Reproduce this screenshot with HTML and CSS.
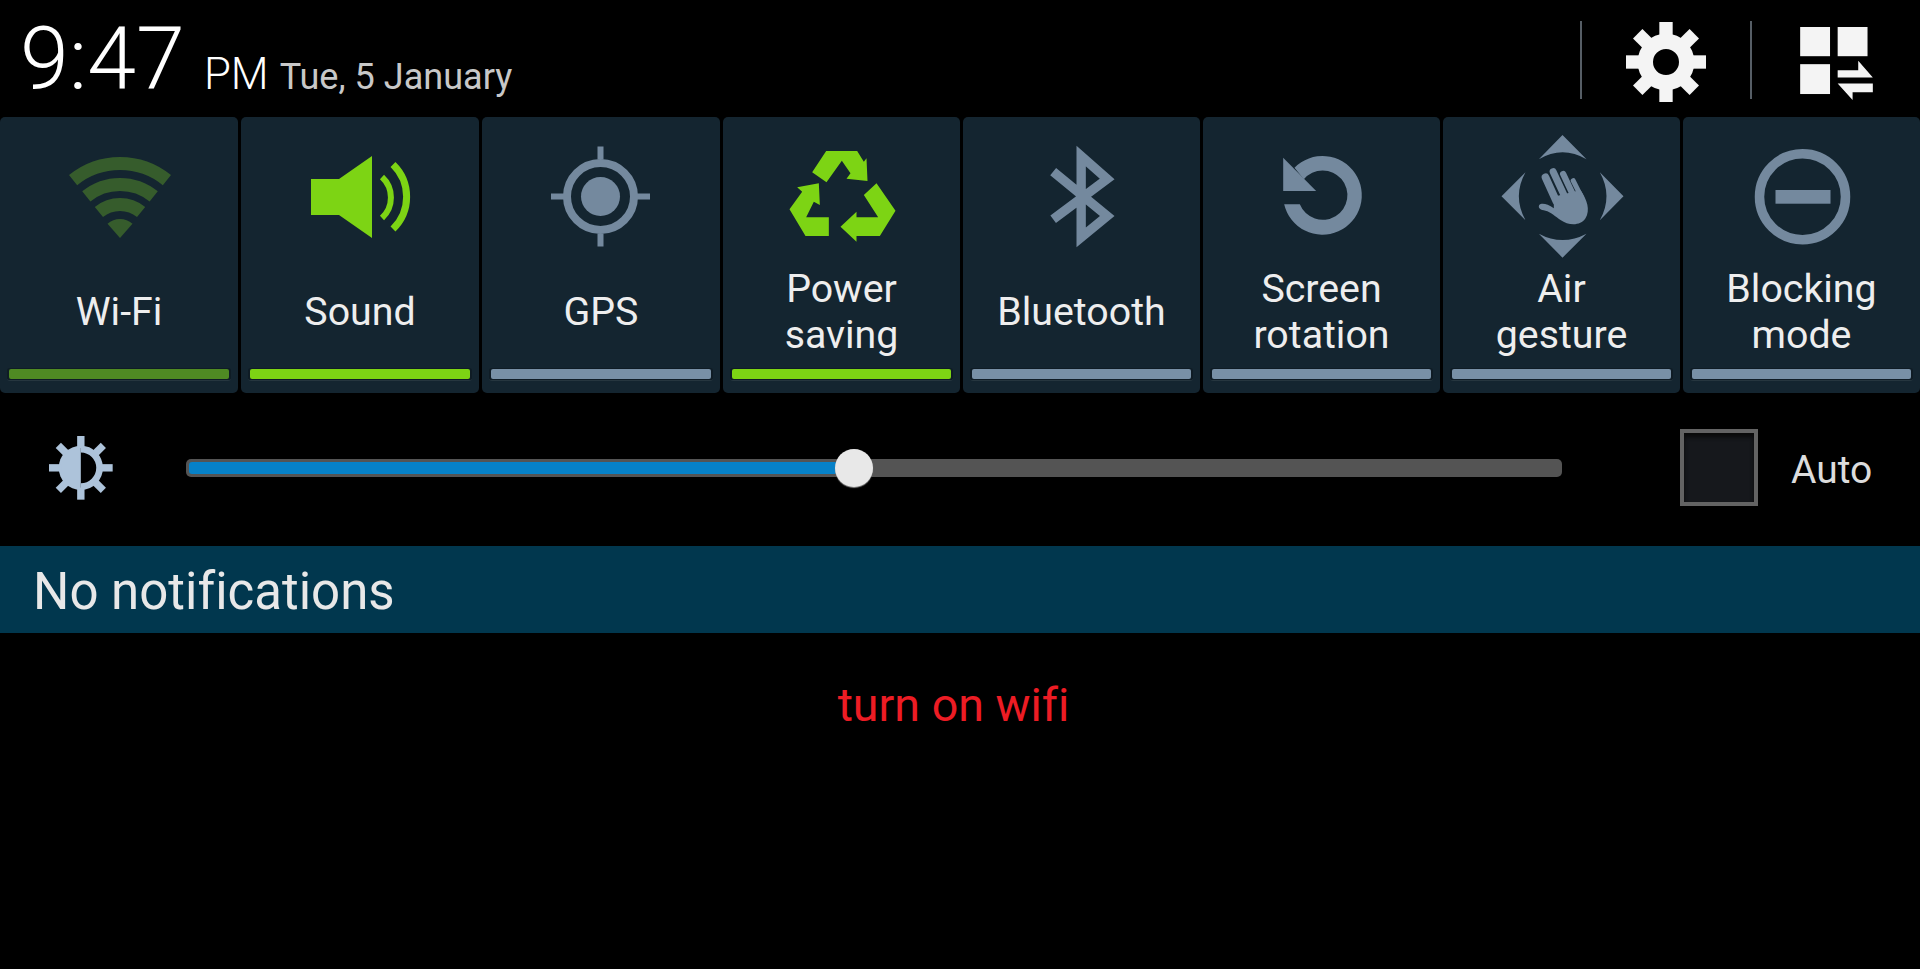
FILE: index.html
```html
<!DOCTYPE html>
<html lang="en">
<head>
  <meta charset="UTF-8" />
  <title>Notification panel</title>
  <link rel="stylesheet" href="styles.css">
</head>
<body>

  <header class="top">
    <div class="clock">
      <span class="time">9:47</span>
      <span class="ampm">PM</span>
      <span class="date">Tue, 5 January</span>
    </div>
    <div class="top-actions">
      <div class="sep"></div>
      <svg class="gear" viewBox="47 33 240 240">
        <g transform="translate(167 153)">
          <circle class="line" r="62" stroke-width="46" />
          <rect x="-20" y="-120" width="40" height="45" />
          <rect x="-20" y="-120" width="40" height="45" transform="rotate(45)" />
          <rect x="-20" y="-120" width="40" height="45" transform="rotate(90)" />
          <rect x="-20" y="-120" width="40" height="45" transform="rotate(135)" />
          <rect x="-20" y="-120" width="40" height="45" transform="rotate(180)" />
          <rect x="-20" y="-120" width="40" height="45" transform="rotate(225)" />
          <rect x="-20" y="-120" width="40" height="45" transform="rotate(270)" />
          <rect x="-20" y="-120" width="40" height="45" transform="rotate(315)" />
        </g>
      </svg>
      <div class="sep"></div>
      <svg class="grid-icon" viewBox="570 48 219 220">
        <rect x="570" y="48" width="90" height="88" />
        <rect x="683" y="48" width="90" height="88" />
        <rect x="570" y="160" width="90" height="90" />
        <polygon points="683,178 745,178 745,150 789,200 683,200" />
        <polygon points="683,218 789,218 789,245 728,245 728,268" />
      </svg>
    </div>
  </header>

  <div class="tiles">
    <div class="tile dim">
      <div class="tile-icon">
        <svg viewBox="0 0 120 100">
          <path class="line" stroke-width="13" d="M14.1 34.1A74.5 74.5 0 0 1 107.9 34.1" />
          <path class="line" stroke-width="13" d="M27.3 50.4A53.5 53.5 0 0 1 94.7 50.4" />
          <path class="line" stroke-width="13" d="M39.9 66A33.5 33.5 0 0 1 82.1 66" />
          <path d="M61 92L48.5 77.7A19 19 0 0 1 73.5 77.7Z" />
        </svg>
      </div>
      <div class="tile-label">Wi-Fi</div>
      <div class="tile-bar"><div></div></div>
    </div>

    <div class="tile on">
      <div class="tile-icon">
        <svg viewBox="0 0 120 100">
          <polygon points="11,33 39,33 72,10 72,92 39,69 11,69" />
          <path class="line" stroke-width="6" d="M82 31A28 28 0 0 1 82 72" />
          <path class="line" stroke-width="7" d="M93 18.5A45 45 0 0 1 93 83" />
        </svg>
      </div>
      <div class="tile-label">Sound</div>
      <div class="tile-bar"><div></div></div>
    </div>

    <div class="tile off">
      <div class="tile-icon">
        <svg viewBox="0 0 120 100">
          <circle class="line" cx="59.5" cy="50.5" r="33.5" stroke-width="8" />
          <circle cx="59.5" cy="50.5" r="19.5" />
          <rect x="56.5" y="0.5" width="6" height="13" />
          <rect x="56.5" y="87.5" width="6" height="13" />
          <rect x="10" y="47.5" width="13" height="6" />
          <rect x="96" y="47.5" width="13" height="6" />
        </svg>
      </div>
      <div class="tile-label">GPS</div>
      <div class="tile-bar"><div></div></div>
    </div>

    <div class="tile on">
      <div class="tile-icon">
        <svg viewBox="64.5 48 360 300">
          <polygon points="155,127 197,63 290,63 310,95 318,85 321,153 258,146 270,130 244,92 198,157" />
          <polygon points="175,160 178,225 160,215 137,262 205,262 205,318 135,318 87,238 125,185 110,172" />
          <polygon points="348,160 405,242 358,318 288,318 288,335 240,290 288,245 288,262 353,262 310,195" />
        </svg>
      </div>
      <div class="tile-label">Power<br>saving</div>
      <div class="tile-bar"><div></div></div>
    </div>

    <div class="tile off">
      <div class="tile-icon">
        <svg viewBox="784.5 48 360 300">
          <path class="line" stroke-width="28" stroke-miterlimit="8" d="M878 125L1040 258L962 322V78L1040 147L878 268" />
        </svg>
      </div>
      <div class="tile-label">Bluetooth</div>
      <div class="tile-bar"><div></div></div>
    </div>

    <div class="tile off">
      <div class="tile-icon">
        <svg viewBox="-25.5 0 360 300">
          <path d="M41 175A118 118 0 1 0 72 65L100 100A74 74 0 1 1 88 175Z" />
          <polygon points="38,35 38,135 137,135" />
        </svg>
      </div>
      <div class="tile-label">Screen<br>rotation</div>
      <div class="tile-bar"><div></div></div>
    </div>

    <div class="tile off">
      <div class="tile-icon">
        <svg viewBox="64.5 78 360 300">
          <path d="M246 45L318 118Q246 76 175 118Z" />
          <path d="M246 413L318 341Q246 379 175 341Z" />
          <path d="M63 229L135 157Q95 229 135 301Z" />
          <path d="M429 229L358 157Q398 229 358 301Z" />
          <g transform="translate(150 120)">
            <path class="line round" stroke-width="23" d="M45 52L78 125" />
            <path class="line round" stroke-width="21" d="M68 35L105 115" />
            <path class="line round" stroke-width="19" d="M98 42L130 110" />
            <path class="line round" stroke-width="15" d="M128 62L152 110" />
            <path d="M70 110L150 90C170 120 180 150 165 175C150 198 115 198 90 180C75 170 60 155 45 152C30 150 22 145 26 135C32 128 50 130 70 145Z" />
          </g>
        </svg>
      </div>
      <div class="tile-label">Air<br>gesture</div>
      <div class="tile-bar"><div></div></div>
    </div>

    <div class="tile off">
      <div class="tile-icon">
        <svg viewBox="-0.5 0 120 100">
          <circle class="line" cx="60" cy="50.7" r="43" stroke-width="9.5" />
          <rect x="33" y="44" width="55" height="13.7" />
        </svg>
      </div>
      <div class="tile-label">Blocking<br>mode</div>
      <div class="tile-bar"><div></div></div>
    </div>
  </div>

  <div class="brightness">
    <svg class="sun" viewBox="57 33 191 191">
      <g transform="translate(152 128)">
        <path d="M0 -66A66 66 0 0 0 0 66Z" />
        <path class="line" stroke-width="20" d="M0 -56A56 56 0 0 1 0 56" />
        <rect class="ray" x="-11" y="-95" width="22" height="36" />
        <rect class="ray" x="-11" y="-95" width="22" height="36" transform="rotate(45)" />
        <rect class="ray" x="-11" y="-95" width="22" height="36" transform="rotate(90)" />
        <rect class="ray" x="-11" y="-95" width="22" height="36" transform="rotate(135)" />
        <rect class="ray" x="-11" y="-95" width="22" height="36" transform="rotate(180)" />
        <rect class="ray" x="-11" y="-95" width="22" height="36" transform="rotate(225)" />
        <rect class="ray" x="-11" y="-95" width="22" height="36" transform="rotate(270)" />
        <rect class="ray" x="-11" y="-95" width="22" height="36" transform="rotate(315)" />
      </g>
    </svg>
    <div class="track">
      <div class="track-fill"></div>
      <div class="thumb"></div>
    </div>
    <div class="auto-check"></div>
    <div class="auto-label">Auto</div>
  </div>

  <div class="band">No notifications</div>

  <div class="message">turn on wifi</div>

</body>
</html>
```

FILE: styles.css
```css
body {
  margin: 0;
  height: 969px;
  overflow: hidden;
  background-color: #000;
  font-family: Roboto, "Liberation Sans", sans-serif;
  font-variant-ligatures: none;
  color: #fff;
}
svg {
  display: block;
  fill: currentColor;
}
svg .line {
  fill: none;
  stroke: currentColor;
}
svg .round {
  stroke-linecap: round;
}

.top {
  height: 117px;
  display: flex;
  justify-content: space-between;
}
.clock {
  display: flex;
  align-items: baseline;
  height: 100px;
  padding-left: 20px;
}
.time {
  font-size: 88px;
  font-weight: 300;
  line-height: 118px;
}
.ampm {
  font-size: 43.7px;
  font-weight: 300;
  margin-left: 19px;
}
.date {
  font-size: 36.1px;
  font-weight: 400;
  color: #c8c8c8;
  margin-left: 11px;
}
.top-actions {
  display: flex;
  align-items: center;
  height: 120px;
  padding-right: 47px;
}
.sep {
  width: 2px;
  height: 78px;
  background-color: #565e66;
}
.gear {
  width: 80px;
  height: 80px;
  margin: 3px 44px 0;
  color: #f4f4f4;
}
.grid-icon {
  width: 73px;
  height: 73px;
  margin: 6px 0 0 48px;
  color: #f4f4f4;
}

.tiles {
  display: grid;
  grid-template-columns: 238px 238px 238px 237px 237px 237px 237px 237px;
  gap: 3px;
  height: 276px;
}
.tile {
  display: flex;
  flex-direction: column;
  background-color: #142530;
  border-radius: 5px;
  --accent: #74899e;
}
.tile.on {
  --accent: #7dd414;
}
.tile.dim {
  --accent: #365c2c;
}
.tile-icon {
  height: 139px;
  padding-top: 29px;
  box-sizing: border-box;
  color: var(--accent);
}
.tile-icon svg {
  width: 120px;
  height: 100px;
  margin: 0 auto;
  overflow: visible;
}
.tile-label {
  height: 112px;
  display: flex;
  align-items: center;
  justify-content: center;
  text-align: center;
  font-size: 39.3px;
  line-height: 46px;
  color: #eee;
}
.tile-bar {
  height: 13px;
  margin: 0 7px;
  padding: 1px 2px 2px;
  box-sizing: border-box;
  background-color: #0f1c25;
  border-bottom: 1px solid #26363f;
  border-radius: 3px;
}
.tile-bar div {
  height: 10px;
  border-radius: 2px;
  background-color: #7890a6;
}
.tile.on .tile-bar div {
  background-color: #7dd414;
}
.tile.dim .tile-bar div {
  background-color: #4f8a23;
}

.brightness {
  height: 150px;
  padding-bottom: 3px;
  display: flex;
  align-items: center;
  padding-left: 49px;
}
.sun {
  width: 64px;
  height: 64px;
  color: #adc3da;
}
.track {
  position: relative;
  width: 1376px;
  height: 18px;
  margin-left: 73px;
  padding: 3px;
  box-sizing: border-box;
  background-color: #545454;
  border-radius: 5px;
}
.track-fill {
  width: 649px;
  height: 12px;
  border-radius: 3px;
  background-color: #0681c8;
}
.thumb {
  position: absolute;
  left: 649px;
  top: -10px;
  width: 38px;
  height: 38px;
  border-radius: 50%;
  background-color: #e8e8e8;
  box-shadow: 0 1px 1px #888;
}
.auto-check {
  width: 78px;
  height: 77px;
  margin: 0 0 1px 118px;
  box-sizing: border-box;
  border: 4px solid #636363;
  background-color: #16181c;
  box-shadow: inset 0 4px 4px #0a0a0a;
}
.auto-label {
  margin: 3px 0 0 33px;
  font-size: 39px;
  color: #dcdcdc;
}

.band {
  height: 83px;
  padding: 4px 0 0 33px;
  display: flex;
  align-items: center;
  background-color: #01374e;
  font-size: 51px;
  font-weight: 400;
  color: #e8e8e8;
}

.message {
  padding: 45px 13px 0 0;
  text-align: center;
  font-size: 46.6px;
  color: #ed1c24;
}
```
